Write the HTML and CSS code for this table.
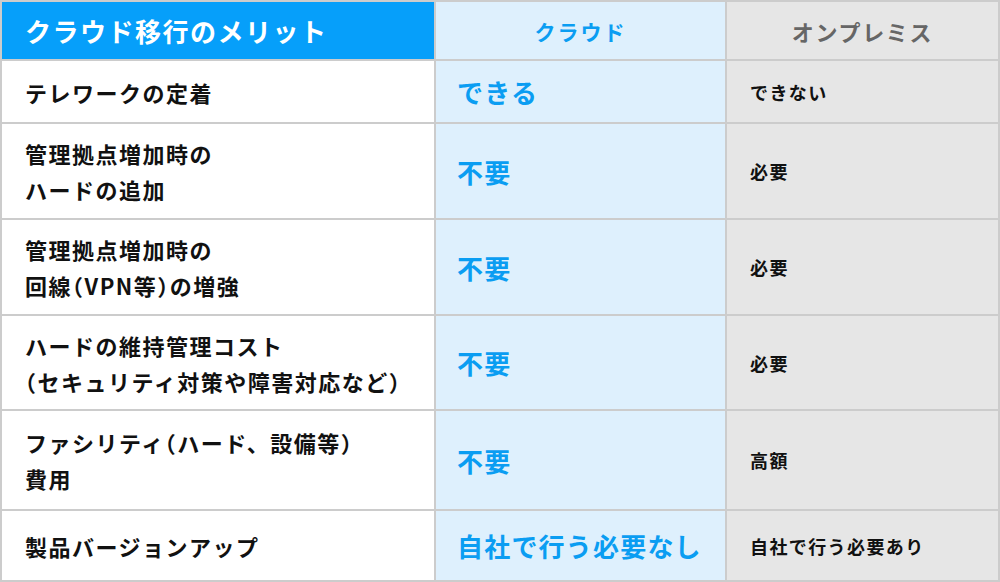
FILE: index.html
```html
<!DOCTYPE html>
<html lang="ja">
<head>
<meta charset="utf-8">
<title>クラウド移行のメリット</title>
<link rel="stylesheet" href="styles.css">
</head>
<body>
<div class="table">
  <div class="cell head-main">クラウド移行のメリット</div>
  <div class="cell head-cloud">クラウド</div>
  <div class="cell head-onprem">オンプレミス</div>

  <div class="cell label"><p class="text">テレワークの定着</p></div>
  <div class="cell cloud">できる</div>
  <div class="cell onprem">できない</div>

  <div class="cell label"><p class="text">管理拠点増加時の<br>ハードの追加</p></div>
  <div class="cell cloud">不要</div>
  <div class="cell onprem">必要</div>

  <div class="cell label"><p class="text">管理拠点増加時の<br>回線<span class="paren">（</span>VPN等<span class="paren">）</span>の増強</p></div>
  <div class="cell cloud">不要</div>
  <div class="cell onprem">必要</div>

  <div class="cell label"><p class="text">ハードの維持管理コスト<br><span class="paren">（</span>セキュリティ対策や障害対応など<span class="paren">）</span></p></div>
  <div class="cell cloud">不要</div>
  <div class="cell onprem">必要</div>

  <div class="cell label"><p class="text">ファシリティ<span class="paren">（</span>ハード、設備等<span class="paren">）</span><br>費用</p></div>
  <div class="cell cloud">不要</div>
  <div class="cell onprem">高額</div>

  <div class="cell label"><p class="text">製品バージョンアップ</p></div>
  <div class="cell cloud">自社で行う必要なし</div>
  <div class="cell onprem">自社で行う必要あり</div>
</div>
</body>
</html>
```

FILE: styles.css
```css
html, body {
  margin: 0;
  padding: 0;
  background: #ffffff;
}

body {
  font-family: "Noto Sans CJK JP", "Noto Sans", sans-serif;
  font-weight: 700;
}

.table {
  display: grid;
  grid-template-columns: 432px 289px 271px;
  grid-template-rows: 57px 61px 94px 94px 93px 98px 69px;
  gap: 2px;
  padding: 2px;
  background: #cccccc;
  width: 1000px;
  height: 582px;
  box-sizing: border-box;
}

.cell {
  display: flex;
  align-items: center;
  white-space: nowrap;
}

.head-main {
  background: #069ffa;
  color: #ffffff;
  font-size: 26px;
  letter-spacing: 1.5px;
  padding-left: 23px;
}

.head-cloud {
  background: #def0fd;
  color: #0a9df2;
  font-size: 21px;
  letter-spacing: 2px;
  justify-content: center;
}

.head-onprem {
  background: #e6e6e6;
  color: #666666;
  font-size: 22px;
  letter-spacing: 1.7px;
  justify-content: center;
}

.label {
  background: #ffffff;
  color: #111111;
  font-size: 22px;
  letter-spacing: 1.5px;
  line-height: 36px;
  padding-left: 23px;
}

.text {
  margin: 0;
}

.paren {
  font-feature-settings: "halt";
}

.cloud {
  background: #def0fd;
  color: #0a9df2;
  font-size: 26px;
  letter-spacing: 1.2px;
  padding-left: 21px;
}

.onprem {
  background: #e6e6e6;
  color: #111111;
  font-size: 18px;
  letter-spacing: 1.4px;
  padding-left: 23px;
}
```
